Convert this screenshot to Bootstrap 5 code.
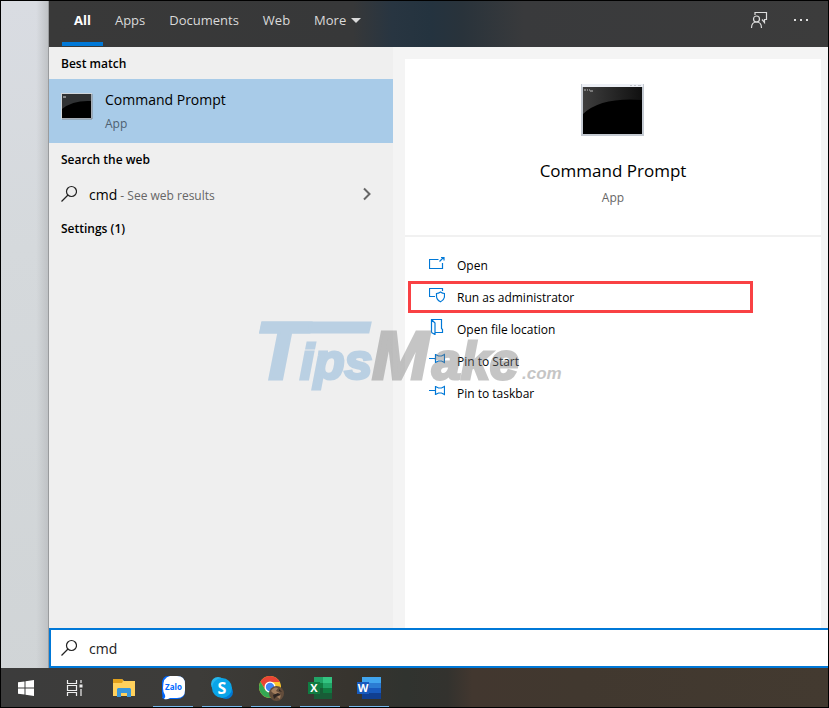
<!DOCTYPE html>
<html lang="en">
<head>
<meta charset="utf-8">
<meta name="viewport" content="width=device-width, initial-scale=1">
<title>Windows Search</title>
<link href="https://cdn.jsdelivr.net/npm/bootstrap@5.3.0/dist/css/bootstrap.min.css" rel="stylesheet">
<script src="https://cdn.jsdelivr.net/npm/bootstrap@5.3.0/dist/js/bootstrap.bundle.min.js"></script>
<style>
body{font-family:"Open Sans","Noto Sans",sans-serif;font-size:12px;line-height:16px;color:#000}
button{font:inherit;color:inherit;background:none;border:0;padding:0}
svg{display:block;flex:none}
.screen{border:1px solid #000;background:linear-gradient(180deg,#d9dce2,#d5d9dc 35%,#d0d4d6)}
.wallpaper{width:48px;background:linear-gradient(90deg,transparent 75%,#bfc2c5);border-right:1px solid #999b9d}
.topbar{height:46px;padding:0 18px 0 13px;color:#dadada;font-size:13px;background:linear-gradient(90deg,#393939 0,#373839 39%,#283541 44%,#24333f 49%,#29333b 53%,#393a3c 61%,#3c3c3c 100%)}
.scope{height:45px;padding:0 12px 3px;border-bottom:4px solid transparent}
.scope.active{color:#fff;font-weight:700;border-color:#0078d7}
.results{width:344px;background:#efefef}
.heading{font-size:12px;line-height:16px;font-weight:600;padding:9px 12px 7px;margin:0}
.best{height:64px;background:#a8cbe8;padding:9px 12px;gap:12px}
.best-name{font-size:14px;line-height:24px}
.muted{color:#666}
.best .muted{color:#4e6070;line-height:24px}
.webrow{height:37px;padding:0 20px 0 12px}
.query{font-size:14px}
.preview{background:#f4f4f4;padding:12px 7px 0 12px}
.pane{background:#fff}
.hero{height:178px;padding-top:24px;border-bottom:2px solid #f1f1f1}
.hero h1{font-size:17px;line-height:24px;margin:22px 0 7px;font-weight:400}
.actions{padding-top:12px}
.action{height:32px;padding:2px 0 0 24px;gap:12px}
.action svg{margin-bottom:6px}
.marked{border:3px solid #f94144;margin-left:3px;padding-left:18px;width:calc(100% - 71px)}
.searchbox{height:40px;border:2px solid #0078d7;border-right:0;background:#fff;padding:0 10px;gap:12px}
.searchbox input{border:0;outline:0;padding:2px 0 0;font-size:14px;line-height:20px;color:#222}
.taskbar{height:39px;background:linear-gradient(90deg,#3c3c3c 0,#3d3c39 24%,#37342e 42%,#30332f 49%,#33322e 54%,#42372f 57%,#41382f 70%,#433a30 100%)}
.task{width:49px;height:39px}
.running::after{content:"";position:absolute;left:5px;right:4px;bottom:0;height:1px;background:#76b9ed}
.brandmark{left:208px;top:287px;pointer-events:none}
</style>
</head>
<body>
<div class="screen vh-100 d-flex flex-column overflow-hidden">
 <div class="d-flex flex-grow-1">
  <div class="wallpaper flex-shrink-0"></div>
  <main class="position-relative flex-grow-1 d-flex flex-column">
   <header class="topbar d-flex justify-content-between">
    <nav class="d-flex" aria-label="Search scope">
     <button class="scope active">All</button>
     <button class="scope">Apps</button>
     <button class="scope">Documents</button>
     <button class="scope">Web</button>
     <button class="scope d-flex align-items-center gap-1">More
      <svg width="12" height="8" viewBox="0 0 12 8"><path d="M1 2h10L6 7z" fill="#dadada"/></svg></button>
    </nav>
    <div class="d-flex align-items-center gap-4 pb-2">
     <button aria-label="Feedback"><svg width="18" height="18" viewBox="0 0 18 18" fill="none" stroke="#dedede" stroke-width="1.2"><path d="M5 4V1.500h11.500v7h-2v3L12 8.500"/><circle cx="6.500" cy="8" r="3"/><path d="M1.500 17c0-4 2-6 5-6s5 2 5 6"/></svg></button>
     <button aria-label="Options"><svg width="18" height="18" viewBox="0 0 18 18" fill="#dedede"><path d="M2 8h2v2H2zM8 8h2v2H8zM14 8h2v2h-2z"/></svg></button>
    </div>
   </header>
   <div class="d-flex flex-grow-1">
    <section class="results flex-shrink-0">
     <h2 class="heading">Best match</h2>
     <button class="best d-flex w-100 text-start">
      <svg class="mt-1" width="32" height="28" viewBox="0 0 32 28"><path d="M0 1h31v26H0z" fill="#d0d6db"/><path d="M31 2v25H1" fill="none" stroke="#7e8790"/><path d="M1 2h29v24H1z"/><path d="M1 2h29v7Q12 8 1 17z" fill="#303234"/><path d="M2 5h3" stroke="#ddd"/></svg>
      <span><span class="best-name d-block">Command Prompt</span><span class="muted d-block">App</span></span>
     </button>
     <h2 class="heading">Search the web</h2>
     <button class="webrow d-flex align-items-center w-100 text-start">
      <svg width="16" height="18" viewBox="0 0 16 18" fill="none" stroke="#222" stroke-width="1.2"><circle cx="10.500" cy="6.500" r="5"/><path d="M7 10 .5 16.500"/></svg>
      <span class="flex-grow-1 ms-2 ps-1 pt-1"><span class="query">cmd</span> <span class="muted">- See web results</span></span>
      <svg width="12" height="14" viewBox="0 0 12 14" fill="none" stroke="#666" stroke-width="2"><path d="m3 1.500 5.500 5.500L3 12.500"/></svg>
     </button>
     <h2 class="heading">Settings (1)</h2>
    </section>
    <section class="preview flex-grow-1 d-flex">
     <div class="pane flex-grow-1">
      <div class="hero d-flex flex-column align-items-center">
       <svg width="64" height="54" viewBox="0 0 64 54"><defs><linearGradient id="gloss"><stop stop-color="#3e3e3e"/><stop offset="1" stop-color="#101010"/></linearGradient></defs><path d="M0 1h63v52H0z" fill="#c4cad2"/><path d="M1 1h61v3H1z" fill="#eceff5"/><path d="M49 2.500h2m2 0h2m2 0h3" stroke="#c2c5cb"/><path d="M2 4h59v47H2z"/><path d="M2 4h59v13Q20 14 2 31z" fill="url(#gloss)"/><path d="M3 7h2m1 0h1m1 0h1m0 1h3" stroke="#bbb"/></svg>
       <h1>Command Prompt</h1>
       <span class="muted">App</span>
      </div>
      <div class="actions">
       <button class="action d-flex align-items-center w-100"><svg width="16" height="16" viewBox="0 0 16 16" fill="none" stroke="#0078d7" stroke-width="1.2"><path d="M9.500 4.500h-9v9h13V8M10.500 6.500 14.500 2.500M12 2.500h3v3"/></svg>Open</button>
       <button class="action marked d-flex align-items-center"><svg width="16" height="16" viewBox="0 0 16 16" fill="none" stroke="#0078d7" stroke-width="1.2"><path d="M6 9.500H.5v-8h13V4M11.500 5c1.500 1 2.500 1.400 4 1.500v2.700c0 2.600-1.500 4.300-4 5.600-2.500-1.300-4-3-4-5.600V6.500C9 6.400 10 6 11.500 5z"/></svg>Run as administrator</button>
       <button class="action d-flex align-items-center w-100"><svg width="16" height="16" viewBox="0 0 16 16" fill="none" stroke="#0078d7" stroke-width="1.200"><path d="M2.500 13.500V.5h10v9l1 1v3H6M2.500.5 6 4v11.500l-3.500-2"/></svg>Open file location</button>
       <button class="action d-flex align-items-center w-100"><svg width="16" height="16" viewBox="0 0 16 16" fill="none" stroke="#0078d7" stroke-width="1.200"><path d="M0 7.500h6.500M6.500 3v9M6.500 3.500l3 1.500h3l3-1.500v8l-3-1.500h-3l-3 1.500"/></svg>Pin to Start</button>
       <button class="action d-flex align-items-center w-100"><svg width="16" height="16" viewBox="0 0 16 16" fill="none" stroke="#0078d7" stroke-width="1.200"><path d="M0 7.500h6.500M6.500 3v9M6.500 3.500l3 1.500h3l3-1.500v8l-3-1.500h-3l-3 1.500"/></svg>Pin to taskbar</button>
      </div>
     </div>
    </section>
   </div>
   <label class="searchbox d-flex align-items-center">
    <svg width="16" height="18" viewBox="0 0 16 18" fill="none" stroke="#222" stroke-width="1.2"><circle cx="10.500" cy="6.500" r="5"/><path d="M7 10 .5 16.500"/></svg>
    <input class="flex-grow-1" type="text" value="cmd" aria-label="Search">
   </label>
   <svg class="brandmark position-absolute" width="320" height="120" viewBox="-5 -30 320 120" style="margin-left:-5px" font-family="Liberation Sans, sans-serif" font-weight="700" font-style="italic">
    <g opacity=".42" fill="#72a7d3" stroke="#72a7d3" stroke-width="3">
     <path d="M6 5h107l-2 9H4z"/><text x="-2" y="61" font-size="82">T</text>
     <text x="43" y="61" font-size="50">ips</text>
    </g>
    <g opacity=".42" fill="#777" stroke="#777" stroke-width="3">
     <text x="115" y="61" font-size="68">M</text><text x="175" y="61" font-size="52">ake</text>
    </g>
    <text x="265" y="61" font-size="17" fill="#777" opacity=".42">.com</text>
   </svg>
  </main>
 </div>
 <footer class="taskbar d-flex flex-shrink-0">
  <button class="task d-flex align-items-center justify-content-center" aria-label="Start"><svg width="16" height="16" viewBox="0 0 16 16" fill="#fff"><path d="M0 2.300 6.500 1.400v6.100H0zM7.500 1.200 16 0v7.500H7.500zM0 8.500h6.500v6.100L0 13.700zM7.500 8.500H16V16l-8.500-1.200z"/></svg></button>
  <button class="task d-flex align-items-center justify-content-center" aria-label="Task view"><svg width="18" height="16" viewBox="0 0 18 16" fill="none" stroke="#eee" stroke-width="1.200"><path d="M1.500 0v3.500h9V0M1.500 16v-3.500h9V16M1.500 5.500h9v5h-9zM15 0v3m0 6v7"/><path d="M13.500 4.500h3v3h-3z" fill="#eee" stroke="none"/></svg></button>
  <button class="task d-flex align-items-center justify-content-center" aria-label="File Explorer"><svg width="22" height="20" viewBox="0 0 22 20"><path d="M0 1h9l2 2h11v15H0z" fill="#ffd15c"/><path d="M0 1h9l1 2-1 2H0z" fill="#e2a11c"/><path d="M4 19v-8l1-1h12l1 1v8h-4v-4H8v4z" fill="#3997db"/></svg></button>
  <button class="task running position-relative d-flex align-items-center justify-content-center" aria-label="Zalo"><svg width="26" height="26" viewBox="0 0 26 26"><path d="M8 1h9q8 0 8 8v7q0 8-8 8H8q-3 1-6-1 1-1 0-5V9q0-8 6-8z" fill="#0068ff"/><path d="M10 1h7q8 0 8 8v6q0 8-8 8h-7q-3 2-6 1 2-2 1-4-2-3-2-7 0-11 7-12z" fill="#fff"/><text x="13.500" y="15" text-anchor="middle" font-family="Open Sans, sans-serif" font-size="8" font-weight="700" fill="#0068ff">Zalo</text></svg></button>
  <button class="task running position-relative d-flex align-items-center justify-content-center" aria-label="Skype"><svg width="24" height="24" viewBox="0 0 24 24"><circle cx="8" cy="8" r="7" fill="#28b8ed"/><circle cx="16" cy="16" r="7" fill="#0078d4"/><circle cx="12" cy="12" r="10" fill="#0aa5e8"/><text x="12" y="18" text-anchor="middle" font-family="Open Sans, sans-serif" font-size="16" font-weight="700" fill="#fff">S</text></svg></button>
  <button class="task running position-relative d-flex align-items-center justify-content-center" aria-label="Chrome"><svg width="26" height="26" viewBox="0 0 26 26"><circle cx="12" cy="12" r="11" fill="#fbc52d"/><path d="M2.500 6.500A11 11 0 0 0 12 23l5-8-9 1z" fill="#34a853"/><path d="M12 7h10Q18.500 1 12 1 6 1 2.500 6.500L7 14z" fill="#e94435"/><circle cx="12" cy="12" r="5.500" fill="#fff"/><circle cx="12" cy="12" r="4.200" fill="#4285f4"/><circle cx="18.500" cy="18.500" r="7.500" fill="#634d3b"/><path d="M13 16q3-5 7-3l-2 3 4 2-3 2-4-2zM19 22l4-3-1 5z" fill="#a27e5e"/><path d="m15 20 5-2 3 2-4 1-3 3zM21 14l3 3-3-1z" fill="#2d2522"/></svg></button>
  <button class="task running position-relative d-flex align-items-center justify-content-center" aria-label="Excel"><svg width="24" height="22" viewBox="0 0 24 22"><path d="M6 0h9v6H6z" fill="#21a366"/><path d="M15 0h9v6h-9z" fill="#33c481"/><path d="M6 6h9v5H6z" fill="#107c41"/><path d="M15 6h9v5h-9z" fill="#21a366"/><path d="M6 11h18v11H6z" fill="#185c37"/><path d="M15 11h9v5h-9z" fill="#107c41"/><path d="M0 5h12v12H0z" fill="#107c41"/><text x="6" y="15" text-anchor="middle" font-family="Open Sans, sans-serif" font-size="11" font-weight="700" fill="#fff">X</text></svg></button>
  <button class="task running position-relative d-flex align-items-center justify-content-center" aria-label="Word"><svg width="24" height="22" viewBox="0 0 24 22"><path d="M5 0h19v6H5z" fill="#41a5ee"/><path d="M5 6h19v5H5z" fill="#2b7cd3"/><path d="M5 11h19v5H5z" fill="#185abd"/><path d="M5 16h19v6H5z" fill="#103f91"/><path d="M0 5h12v12H0z" fill="#185abd"/><text x="6" y="15" text-anchor="middle" font-family="Open Sans, sans-serif" font-size="11" font-weight="700" fill="#fff">W</text></svg></button>
 </footer>
</div>
</body>
</html>
